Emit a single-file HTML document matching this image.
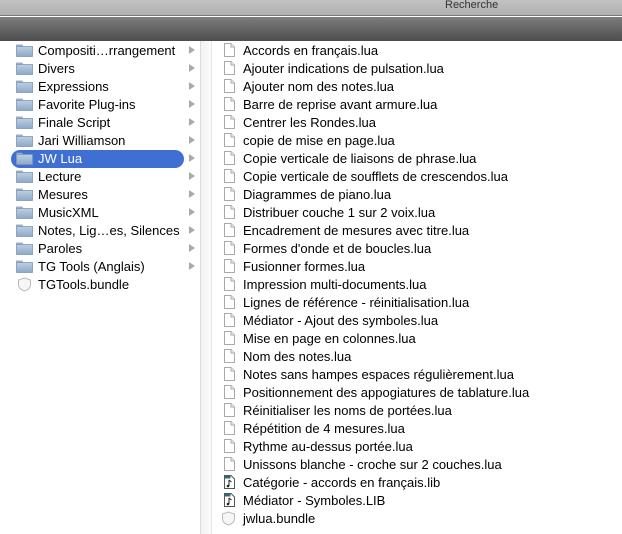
<!DOCTYPE html>
<html><head><meta charset="utf-8"><style>
*{margin:0;padding:0;box-sizing:border-box}
body{width:622px;height:534px;overflow:hidden;background:#fff;font-family:"Liberation Sans","DejaVu Sans",sans-serif;font-size:13px;color:#000;position:relative}
#top{position:absolute;left:0;top:0;width:622px;height:16px;background:linear-gradient(#c2c2c2,#b0b0b0);border-bottom:1px solid #7a7a7a}
#top span{position:absolute;left:445px;top:-1px;font-size:11px;line-height:12px;color:#333}
#bar{position:absolute;left:0;top:17px;width:622px;height:24px;background:linear-gradient(#7c7c7c,#4e4e4e)}
#gut{position:absolute;left:200px;top:41px;width:12px;height:493px;background:linear-gradient(90deg,#f2f2f2,#fbfbfb);border-left:1px solid #dcdcdc;border-right:1px solid #e6e6e6}
.r{position:absolute;height:18px;line-height:18px;white-space:nowrap}
.c1{left:38px}
.c2{left:243px}
.sel{position:absolute;left:11px;top:150px;width:173px;height:18px;border-radius:9px;background:#3f6fd3}
.f{position:absolute;left:16px;width:17px;height:13px}
.ar{position:absolute;left:189px;width:0;height:0;border-left:6px solid #aaa;border-top:4px solid transparent;border-bottom:4px solid transparent}
.d{position:absolute;left:224px;width:11px;height:14px}
</style></head><body>
<div id="top"><span>Recherche</span></div>
<div id="bar"></div>
<div id="gut"></div>
<div class="sel"></div>
<svg width="0" height="0" style="position:absolute"><defs>
<linearGradient id="fg" x1="0" y1="0" x2="0" y2="1"><stop offset="0" stop-color="#bcd0e4"/><stop offset="1" stop-color="#8ea9c6"/></linearGradient>
</defs></svg>
<div id="c"></div>
<script>
var L=["Compositi…rrangement","Divers","Expressions","Favorite Plug-ins","Finale Script","Jari Williamson","JW Lua","Lecture","Mesures","MusicXML","Notes, Lig…es, Silences","Paroles","TG Tools (Anglais)","TGTools.bundle"];
var R=["Accords en français.lua","Ajouter indications de pulsation.lua","Ajouter nom des notes.lua","Barre de reprise avant armure.lua","Centrer les Rondes.lua","copie de mise en page.lua","Copie verticale de liaisons de phrase.lua","Copie verticale de soufflets de crescendos.lua","Diagrammes de piano.lua","Distribuer couche 1 sur 2 voix.lua","Encadrement de mesures avec titre.lua","Formes d'onde et de boucles.lua","Fusionner formes.lua","Impression multi-documents.lua","Lignes de référence - réinitialisation.lua","Médiator - Ajout des symboles.lua","Mise en page en colonnes.lua","Nom des notes.lua","Notes sans hampes espaces régulièrement.lua","Positionnement des appogiatures de tablature.lua","Réinitialiser les noms de portées.lua","Répétition de 4 mesures.lua","Rythme au-dessus portée.lua","Unissons blanche - croche sur 2 couches.lua","Catégorie - accords en français.lib","Médiator - Symboles.LIB","jwlua.bundle"];
var h="";
var shield='<path d="M1.5 3 L7.5 1 L13.5 3 L13.5 8 Q13.5 12 7.5 14 Q1.5 12 1.5 8 Z" fill="#f6f6f6" stroke="#bbb"/>';
L.forEach(function(t,i){var y=42+18*i;
 if(i<13){h+='<svg class="f" style="top:'+(y+2)+'px" viewBox="0 0 17 13"><path d="M0.5 2.5 V1 H6 L7 2.5 Z" fill="#a9bfd6" stroke="#7f98b4" stroke-width="0.7"/><rect x="0.5" y="2.5" width="16" height="10" fill="url(#fg)" stroke="#7f98b4" stroke-width="0.8"/></svg>';
 h+='<div class="ar" style="top:'+(y+4)+'px"></div>';}
 else h+='<svg class="f" style="top:'+(y+1)+'px;height:15px" viewBox="0 0 15 15">'+shield+'</svg>';
 h+='<div class="r c1" style="top:'+y+'px;'+(i==6?'color:#fff':'')+'">'+t+'</div>';});
R.forEach(function(t,i){var y=42+18*i;
 if(i<24) h+='<svg class="d" style="top:'+(y+1)+'px" viewBox="0 0 11 14"><path d="M0.5 0.5 H7 L10.5 4 V13.5 H0.5 Z" fill="#fff" stroke="#aaa"/><path d="M7 0.5 V4 H10.5" fill="#eee" stroke="#aaa"/></svg>';
 else if(i<26) h+='<svg class="d" style="top:'+(y+1)+'px" viewBox="0 0 11 14"><path d="M0.5 0.5 H7 L10.5 4 V13.5 H0.5 Z" fill="#fff" stroke="#555"/><rect x="0.5" y="0.5" width="6" height="3" fill="#2d6b7a"/><path d="M5 5 V11 M5 5 L7.5 7" stroke="#222" fill="none"/><circle cx="4" cy="11" r="1.3" fill="#222"/></svg>';
 else h+='<svg class="d" style="top:'+(y+1)+'px;width:15px;left:221px;height:15px" viewBox="0 0 15 15">'+shield+'</svg>';
 h+='<div class="r c2" style="top:'+y+'px">'+t+'</div>';});
document.getElementById("c").innerHTML=h;
</script>
</body></html>
